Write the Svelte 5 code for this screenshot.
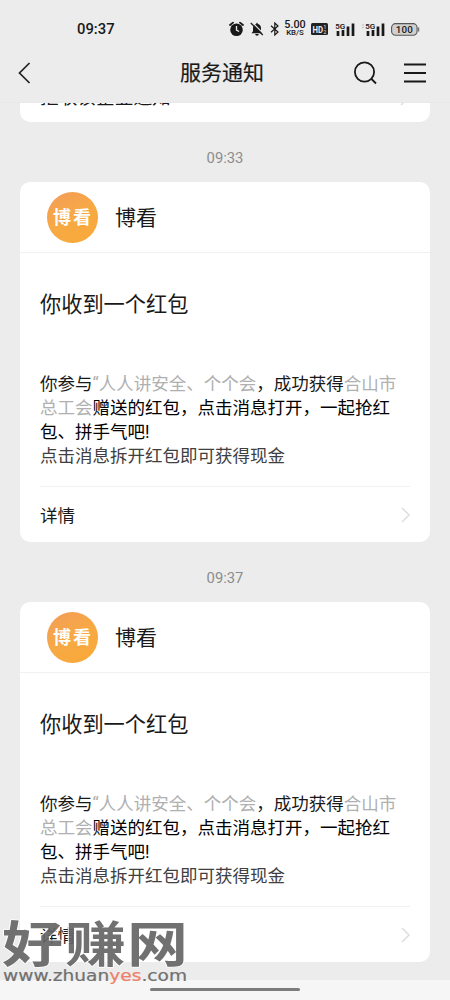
<script lang="ts">
  // Messages shown in the notification thread
  const messages = [
    { id: 1, time: '09:33' },
    { id: 2, time: '09:37' }
  ];

  const signals = [{ id: 'sim1', roaming: false }, { id: 'sim2', roaming: true }];
</script>

<div class="screen">
  <header>
    <div class="status-bar">
      <span class="clock">09:37</span>
      <div class="status-icons">
        <svg class="alarm" width="15" height="16" viewBox="0 0 15 16">
          <circle cx="7.5" cy="8.7" r="6.3" fill="#191919" />
          <path d="M1 4 4 1.6M14 4 11 1.6" stroke="#191919" stroke-width="1.8" stroke-linecap="round" />
          <path d="M7.5 5v4l2.6 1.5" fill="none" stroke="#eee" stroke-width="1.3" />
        </svg>
        <svg class="mute" width="14" height="14" viewBox="0 0 14 14">
          <path d="M1.500 11.300h11l-1.500-2V6C11 3.500 9.500 2.300 8 1.900L7 .6 6 1.900C4.500 2.300 3 3.500 3 6v3.300zM5.200 12h3.600a1.800 1.800 0 0 1-3.600 0z" fill="#191919" />
          <path d="M1.800 0 14 12.300" stroke="#ededed" stroke-width="1.200" />
          <path d="m.8 1 12 12" stroke="#191919" stroke-width="1.300" />
        </svg>
        <svg class="bluetooth" width="10" height="14" viewBox="0 0 10 14">
          <path d="m1 3.700 7 6.300-3.200 3V1L8 4 1 10.300" fill="none" stroke="#191919" stroke-width="1.200" />
        </svg>
        <div class="speed">
          <b>5.00</b>
          <small>KB/S</small>
        </div>
        <svg class="hd" width="17" height="12" viewBox="0 0 17 12">
          <rect width="17" height="12" rx="1.500" fill="#222" />
          <text x="1.500" y="9.500" font-size="9.500" font-weight="700" textLength="10.500" lengthAdjust="spacingAndGlyphs">HD</text>
          <text x="12.400" y="5.700" font-size="5">1</text>
          <text x="12.400" y="10.600" font-size="5">2</text>
        </svg>
        {#each signals as signal (signal.id)}
          <svg class="signal" class:second={signal.roaming} width="25" height="15" viewBox="0 0 25 15">
            {#if signal.roaming}
              <path d="M1 3h2M1 5.500h2" stroke="#bbb" />
            {/if}
            <text x="4.200" y="6.500" font-size="8" font-weight="600" textLength="10" lengthAdjust="spacingAndGlyphs">5G</text>
            <path d="M7 9v5M12 8v6M17 4.500V14M22 1.500V14" stroke="#191919" stroke-width="2.700" />
          </svg>
        {/each}
        <svg class="battery" width="29" height="13" viewBox="0 0 29 13">
          <rect x=".6" y=".6" width="25.500" height="11.600" rx="4" fill="#d0d0d0" stroke="#555" stroke-width="1.100" />
          <path d="M27.700 4.500v4" stroke="#555" stroke-width="1" />
          <text x="4.800" y="9.800" font-size="9.800" font-weight="500" textLength="17">100</text>
        </svg>
      </div>
    </div>
    <nav>
      <svg width="14" height="24" viewBox="0 0 14 24">
        <path d="M12.500 2 2.500 12l10 10" fill="none" stroke="#222" stroke-width="1.700" />
      </svg>
      <h1>服务通知</h1>
      <div class="actions">
        <svg width="24" height="24" viewBox="0 0 24 24">
          <circle cx="10.500" cy="11" r="9.600" fill="none" stroke="#191919" stroke-width="1.800" />
          <path d="m17.500 18 4.500 4.500" stroke="#191919" stroke-width="1.800" />
        </svg>
        <svg width="22" height="22" viewBox="0 0 22 22">
          <path d="M0 2.500h22M0 11h22M0 19.500h22" stroke="#191919" stroke-width="2" />
        </svg>
      </div>
    </nav>
  </header>

  <main>
    <section class="card previous">
      <span>拒收该企业通知</span>
      <svg width="10" height="16" viewBox="0 0 10 16">
        <path d="m1 1 7 7-7 7" />
      </svg>
    </section>
    {#each messages as message (message.id)}
      <time>{message.time}</time>
      <section class="card">
        <div class="sender">
          <div class="avatar">博看</div>
          <span>博看</span>
        </div>
        <div class="content">
          <h2>你收到一个红包</h2>
          <p>
            你参与<i>“人人讲安全、个个会</i>，成功获得<i>合山市</i><br />
            <i>总工会</i><b>赠送的红包，点击消息打开，一起抢红</b><br />
            <b>包、拼手气吧!</b><br />
            <span>点击消息拆开红包即可获得现金</span>
          </p>
        </div>
        <div class="detail">
          <span>详情</span>
          <svg width="10" height="16" viewBox="0 0 10 16">
            <path d="m1 1 7 7-7 7" />
          </svg>
        </div>
      </section>
    {/each}
  </main>

  <footer><div class="home-bar"></div></footer>

  <svg class="watermark" width="192" height="70" viewBox="0 0 192 70">
    <g transform="translate(2 45) scale(1 .8)">
      <text class="brand" x="0 63 125" y="0">好赚网</text>
    </g>
    <text class="url" x="3" y="64" textLength="184" lengthAdjust="spacingAndGlyphs">www.zhuan<tspan>yes</tspan>.com</text>
  </svg>
</div>

<style>
  :global(body) {
    background: #ececec;
  }

  .screen {
    position: relative;
    display: flex;
    flex-direction: column;
    width: 450px;
    height: 1000px;
    overflow: hidden;
    background: #ececec;
    color: #191919;
    font-family: Roboto, 'Noto Sans CJK SC', sans-serif;
  }

  header {
    flex: none;
    height: 103px;
    box-sizing: border-box;
    border-bottom: 1px solid #e9e9e9;
  }

  .status-bar {
    display: flex;
    align-items: center;
    justify-content: space-between;
    height: 46px;
    padding: 12px 30px 0 77px;
    box-sizing: border-box;
  }

  .clock {
    font-size: 14.8px;
    font-weight: 500;
  }

  .status-icons {
    display: flex;
    align-items: center;
  }

  .status-icons text {
    fill: #191919;
  }

  .mute {
    margin-left: 6px;
  }

  .bluetooth {
    margin-left: 6px;
  }

  .speed {
    display: flex;
    flex-direction: column;
    align-items: center;
    width: 22px;
    margin-left: 4px;
    line-height: 8px;
  }

  .speed b {
    font-size: 10.8px;
    font-weight: 500;
  }

  .speed small {
    font-size: 7.8px;
    font-weight: 500;
  }

  .hd {
    margin-left: 5px;
  }

  .status-icons .hd text {
    fill: #eee;
  }

  .signal {
    margin-left: 3px;
  }

  .signal.second {
    margin-left: 5px;
  }

  .battery {
    margin-left: 5px;
  }

  nav {
    display: grid;
    grid-template-columns: 1fr auto 1fr;
    align-items: center;
    height: 54px;
    padding: 0 24px 0 17px;
  }

  h1 {
    margin: 0;
    padding-left: 1px;
    font-size: 21px;
    font-weight: 400;
    line-height: 30px;
    -webkit-text-stroke: 0.2px #191919;
  }

  .actions {
    display: flex;
    align-items: center;
    justify-content: flex-end;
    gap: 26px;
  }

  main {
    flex: 1;
    min-height: 0;
    overflow: hidden;
  }

  .card {
    width: 410px;
    height: 360px;
    margin: 0 auto;
    box-sizing: border-box;
    background: #fff;
    border-radius: 10px;
  }

  .card.previous {
    display: flex;
    align-items: flex-end;
    justify-content: space-between;
    height: 55px;
    margin-top: -36px;
    padding: 0 20px 14px;
    font-size: 18.7px;
    line-height: 20px;
  }

  .card.previous svg {
    margin-bottom: 2px;
  }

  time {
    display: block;
    height: 60px;
    padding-top: 25px;
    box-sizing: border-box;
    color: #8c8c8c;
    font-size: 14.8px;
    line-height: 22px;
    text-align: center;
  }

  .card + time {
    flex: none;
  }

  .sender {
    display: flex;
    align-items: center;
    gap: 17px;
    height: 71px;
    padding-left: 27px;
    box-sizing: border-box;
    border-bottom: 1px solid #f1f1f1;
    font-size: 21px;
  }

  .sender > span {
    padding-top: 2px;
    line-height: 28px;
  }

  .avatar {
    display: flex;
    align-items: center;
    justify-content: center;
    width: 51px;
    height: 51px;
    border-radius: 50%;
    background: linear-gradient(150deg, #f39c5b, #f7a944 50%, #f8aa38);
    color: #fff;
    font-size: 18px;
    font-weight: 700;
    letter-spacing: 2px;
    text-indent: 1px;
    line-height: 24px;
    padding-top: 1px;
    box-sizing: border-box;
  }

  .content {
    height: 234px;
    margin: 0 20px;
    padding-top: 36.5px;
    box-sizing: border-box;
    border-bottom: 1px solid #f1f1f1;
  }

  h2 {
    margin: 0;
    font-size: 21.2px;
    font-weight: 400;
    line-height: 30px;
  }

  p {
    margin: 52.5px 0 0;
    font-size: 17.5px;
    line-height: 24px;
    white-space: nowrap;
  }

  p i {
    color: #b0b0b0;
    font-style: normal;
  }

  p b {
    color: #000;
    font-weight: 400;
  }

  p span {
    color: #404040;
  }

  .detail {
    display: flex;
    align-items: center;
    justify-content: space-between;
    height: 55px;
    padding: 0 19px 0 20px;
    font-size: 17.5px;
  }

  .card path {
    fill: none;
    stroke: #dedede;
    stroke-width: 1.5;
  }

  footer {
    display: flex;
    flex: none;
    justify-content: center;
    height: 20px;
    padding-top: 8px;
    box-sizing: border-box;
    background: #f6f6f6;
  }

  .home-bar {
    width: 150px;
    height: 3px;
    border-radius: 2px;
    background: #7d7d7d;
  }

  .watermark {
    position: absolute;
    left: 0;
    top: 917px;
    opacity: 0.92;
  }

  .watermark text {
    fill: #666;
    stroke: #fff;
    stroke-linejoin: round;
    paint-order: stroke;
  }

  .watermark .brand {
    font-size: 61px;
    font-weight: 700;
    stroke-width: 2px;
  }

  .watermark .url {
    font-family: 'DejaVu Sans', sans-serif;
    font-size: 15px;
    stroke: #666;
    stroke-width: 0.2px;
  }

  .watermark .url tspan {
    fill: #f0765c;
    stroke: #f0765c;
  }
</style>
